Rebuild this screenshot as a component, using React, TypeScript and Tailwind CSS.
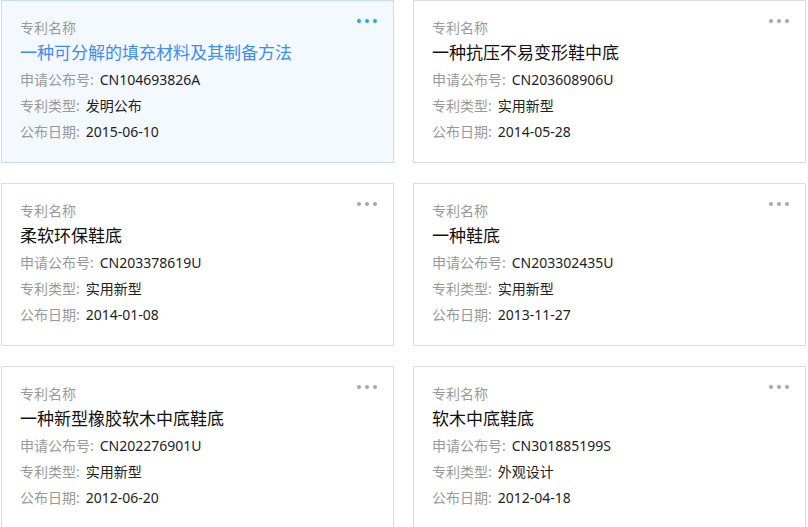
import React from "react";

type Patent = {
  name: string;
  no: string;
  type: string;
  date: string;
};

const patents: Patent[] = [
  { name: "一种可分解的填充材料及其制备方法", no: "CN104693826A", type: "发明公布", date: "2015-06-10" },
  { name: "一种抗压不易变形鞋中底", no: "CN203608906U", type: "实用新型", date: "2014-05-28" },
  { name: "柔软环保鞋底", no: "CN203378619U", type: "实用新型", date: "2014-01-08" },
  { name: "一种鞋底", no: "CN203302435U", type: "实用新型", date: "2013-11-27" },
  { name: "一种新型橡胶软木中底鞋底", no: "CN202276901U", type: "实用新型", date: "2012-06-20" },
  { name: "软木中底鞋底", no: "CN301885199S", type: "外观设计", date: "2012-04-18" },
];

function Row({ label, value }: { label: string; value: string }) {
  return (
    <div className="flex h-[26px] items-center text-[14px]">
      <span className="text-[#999]">{label}:</span>
      <span className="ml-[6px] text-[#222]">{value}</span>
    </div>
  );
}

function PatentCard({ p, active }: { p: Patent; active: boolean }) {
  return (
    <div
      className={
        "relative h-[163px] border px-[18px] pt-[13px] " +
        (active ? "border-[#c6dcfb] bg-[#f4f8ff]" : "border-[#dcdcdc] bg-white")
      }
    >
      {/* ── more menu ── */}
      <div className="absolute right-[16px] top-[18px] flex gap-[4px]">
        {[0, 1, 2].map((i) => (
          <span
            key={i}
            className={
              "block h-[4px] w-[4px] rounded-full " +
              (active ? "bg-[#13aef5]" : "bg-[#a8a8a8]")
            }
          />
        ))}
      </div>

      <div className="flex h-[26px] items-center text-[14px] text-[#9a9a9a]">专利名称</div>
      <div
        className={
          "my-[1px] flex h-[24px] items-center text-[17px] " +
          (active ? "text-[#3d8cf5]" : "text-[#111]")
        }
      >
        {p.name}
      </div>
      <Row label="申请公布号" value={p.no} />
      <Row label="专利类型" value={p.type} />
      <Row label="公布日期" value={p.date} />
    </div>
  );
}

export default function App() {
  return (
    <div
      className="h-[527px] w-[808px] overflow-hidden bg-white pl-[1px]"
      style={{ fontFamily: '"Noto Sans", "Noto Sans CJK SC", sans-serif' }}
    >
      <div className="grid w-[805px] grid-cols-2 gap-x-[19px] gap-y-[20px]">
        {patents.map((p, i) => (
          <PatentCard key={p.no} p={p} active={i === 0} />
        ))}
      </div>
    </div>
  );
}
